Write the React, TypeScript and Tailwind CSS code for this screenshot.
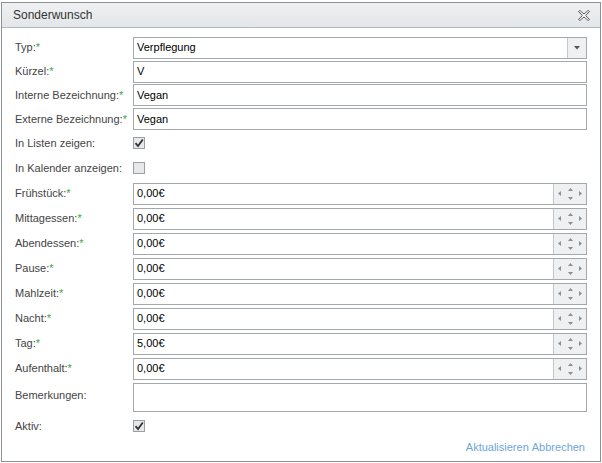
import React from 'react';

const font = { fontFamily: '"Liberation Sans", Arial, sans-serif' };

function Star() {
  return <span className="text-[#3fa33f]">*</span>;
}

function Label({ text, req }: { text: string; req?: boolean }) {
  return (
    <div className="w-[118px] shrink-0 text-[11px] text-[#444]">
      {text}
      {req && <Star />}
    </div>
  );
}

function TextInput({ value }: { value: string }) {
  return (
    <div className="flex h-[22px] flex-1 items-center border border-[#a3a8ae] bg-white px-[3px] text-[11px] text-black">
      {value}
    </div>
  );
}

function Spinner({ value }: { value: string }) {
  return (
    <div className="flex h-[22px] flex-1 border border-[#a3a8ae] bg-white text-[11px] text-black">
      <div className="flex flex-1 items-center px-[3px]">{value}</div>
      <div className="flex w-[33px] items-center justify-between border-l border-[#c3c7cc] bg-[#eef0f2] px-[4px]">
        <svg width="3" height="5" viewBox="0 0 3 5"><path d="M3 0L0 2.5L3 5z" fill="#8a8f95" /></svg>
        <svg width="5" height="14" viewBox="0 0 5 14">
          <path d="M0 4L2.5 1L5 4z" fill="#8a8f95" />
          <path d="M0 10L2.5 13L5 10z" fill="#8a8f95" />
        </svg>
        <svg width="3" height="5" viewBox="0 0 3 5"><path d="M0 0L3 2.5L0 5z" fill="#8a8f95" /></svg>
      </div>
    </div>
  );
}

function Check({ on }: { on?: boolean }) {
  return (
    <div className="flex h-[12px] w-[12px] items-center justify-center border border-[#9a9fa5] bg-[#e6e8ea]">
      {on && (
        <svg width="10" height="10" viewBox="0 0 10 10">
          <path d="M1.5 5.2L4 8L8.8 1.5" fill="none" stroke="#333" strokeWidth="1.8" />
        </svg>
      )}
    </div>
  );
}

function Row({ h, children }: { h: string; children: React.ReactNode }) {
  return <div className={`flex items-center ${h}`}>{children}</div>;
}

const money: [string, string][] = [
  ['Frühstück:', '0,00€'],
  ['Mittagessen:', '0,00€'],
  ['Abendessen:', '0,00€'],
  ['Pause:', '0,00€'],
  ['Mahlzeit:', '0,00€'],
  ['Nacht:', '0,00€'],
  ['Tag:', '5,00€'],
  ['Aufenthalt:', '0,00€'],
];

export default function App() {
  return (
    <div className="h-[463px] w-[602px] bg-white pt-[2px] pl-[1px]" style={font}>
      <div className="flex h-[460px] w-[600px] flex-col border border-[#8c9197] bg-white">
        <div className="flex h-[25px] shrink-0 items-center justify-between border-b border-[#b4b8bd] bg-gradient-to-b from-[#eff0f2] to-[#e3e6e9] pr-[10px] pl-[11px]">
          <span className="text-[12px] text-[#333]">Sonderwunsch</span>
          <svg width="12" height="11" viewBox="0 0 12 11">
            <path
              d="M0.5 1.5L1.8 0.5L6 4L10.2 0.5L11.5 1.5L7.6 5.5L11.5 9.5L10.2 10.5L6 7L1.8 10.5L0.5 9.5L4.4 5.5Z"
              fill="#fff"
              stroke="#444"
              strokeWidth="0.9"
              strokeLinejoin="round"
            />
          </svg>
        </div>
        <div className="flex flex-col pt-[7px] pr-[13px] pl-[13px]">
          <Row h="h-[25px]">
            <Label text="Typ:" req />
            <div className="flex h-[22px] flex-1 border border-[#a3a8ae] bg-white text-[11px] text-black">
              <div className="flex flex-1 items-center px-[3px]">Verpflegung</div>
              <div className="flex w-[19px] items-center justify-center border-l border-[#c3c7cc] bg-[#eef0f2]">
                <svg width="6" height="4" viewBox="0 0 6 4"><path d="M0 0H6L3 3.5z" fill="#555" /></svg>
              </div>
            </div>
          </Row>
          <Row h="h-[23px]">
            <Label text="Kürzel:" req />
            <TextInput value="V" />
          </Row>
          <Row h="h-[24px]">
            <Label text="Interne Bezeichnung:" req />
            <TextInput value="Vegan" />
          </Row>
          <Row h="h-[24px]">
            <Label text="Externe Bezeichnung:" req />
            <TextInput value="Vegan" />
          </Row>
          <Row h="h-[24px]">
            <Label text="In Listen zeigen:" />
            <Check on />
          </Row>
          <Row h="h-[26px]">
            <Label text="In Kalender anzeigen:" />
            <Check />
          </Row>
          {money.map(([l, v]) => (
            <Row key={l} h="h-[25px]">
              <Label text={l} req />
              <Spinner value={v} />
            </Row>
          ))}
          <div className="flex h-[33px] items-start pt-[2px]">
            <div className="w-[118px] shrink-0 pt-[4px] text-[11px] text-[#444]">Bemerkungen:</div>
            <div className="h-[29px] flex-1 border border-[#a3a8ae] bg-white" />
          </div>
          <Row h="h-[24px]">
            <Label text="Aktiv:" />
            <Check on />
          </Row>
          <div className="flex h-[18px] items-center justify-end pr-[2px] text-[11px] text-[#6ea6dc]">
            <span>Aktualisieren</span>
            <span className="ml-[3px]">Abbrechen</span>
          </div>
        </div>
      </div>
    </div>
  );
}
